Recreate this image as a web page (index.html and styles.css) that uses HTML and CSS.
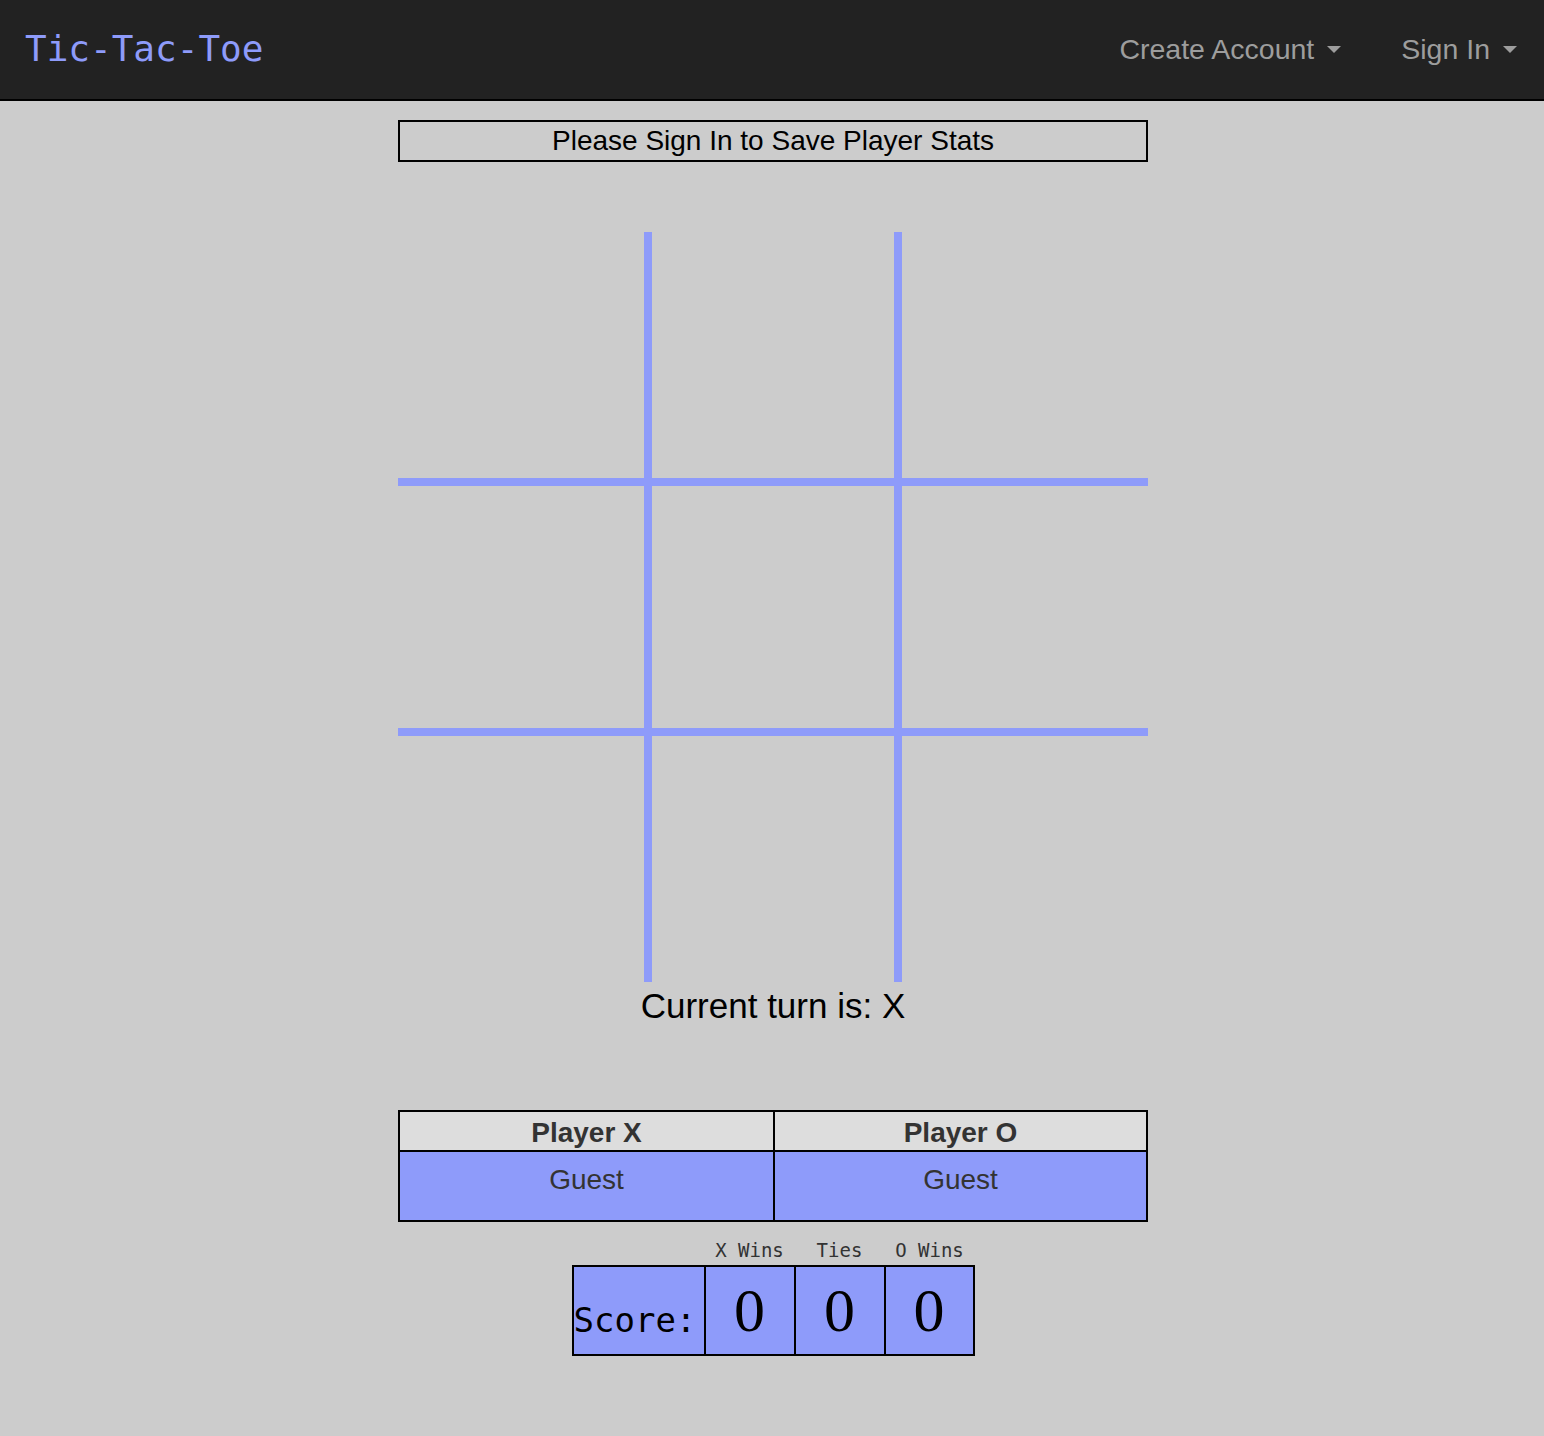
FILE: index.html
```html
<!DOCTYPE html>
<html lang="en">
<head>
<meta charset="UTF-8">
<meta name="viewport" content="width=device-width, initial-scale=1.0">
<title>Tic-Tac-Toe</title>
<link rel="stylesheet" href="styles.css">
</head>
<body>
<nav class="navbar">
  <div class="brand">Tic-Tac-Toe</div>
  <ul class="nav-links">
    <li class="nav-item">Create Account <span class="caret"></span></li>
    <li class="nav-item">Sign In <span class="caret"></span></li>
  </ul>
</nav>

<main class="container">
  <div class="message">Please Sign In to Save Player Stats</div>

  <div class="board">
    <div class="cell" data-index="0"></div>
    <div class="cell" data-index="1"></div>
    <div class="cell" data-index="2"></div>
    <div class="cell" data-index="3"></div>
    <div class="cell" data-index="4"></div>
    <div class="cell" data-index="5"></div>
    <div class="cell" data-index="6"></div>
    <div class="cell" data-index="7"></div>
    <div class="cell" data-index="8"></div>
  </div>

  <div class="turn">Current turn is: <span id="turn">X</span></div>

  <div class="players">
    <div class="player-head">Player X</div>
    <div class="player-head">Player O</div>
    <div class="player-name">Guest</div>
    <div class="player-name">Guest</div>
  </div>

  <div class="score">
    <div class="score-labels">
      <span class="score-spacer"></span>
      <span class="score-label">X Wins</span>
      <span class="score-label">Ties</span>
      <span class="score-label">O Wins</span>
    </div>
    <div class="score-box">
      <div class="score-title">Score:</div>
      <div class="score-value" id="xWins">0</div>
      <div class="score-value" id="ties">0</div>
      <div class="score-value" id="oWins">0</div>
    </div>
  </div>
</main>
</body>
</html>
```

FILE: styles.css
```css
body {
  margin: 0;
  padding: 0;
  background-color: #ccc;
  font-family: "Liberation Sans", Arial, sans-serif;
  font-size: 28px;
}

/* barra superior */
.navbar {
  display: flex;
  align-items: center;
  justify-content: space-between;
  height: 99px;
  background-color: #222;
  border-bottom: 2px solid #000;
  padding: 0 27px 0 25px;
}
.brand {
  font-family: "DejaVu Sans Mono", monospace;
  font-size: 36px;
  color: #8e9bfa;
  margin-top: -3px;
}
.nav-links {
  display: flex;
  gap: 60px;
  list-style: none;
  margin: 0;
  padding: 0;
}
.nav-item {
  color: #9d9d9d;
  font-size: 28.5px;
  display: flex;
  align-items: center;
}
.caret {
  display: inline-block;
  width: 0;
  height: 0;
  margin-left: 13px;
  border-top: 7px solid #9d9d9d;
  border-left: 7px solid transparent;
  border-right: 7px solid transparent;
}

.container {
  width: 750px;
  margin: 0 0 0 calc(50% - 374px);
}

.message {
  margin-top: 19px;
  border: 2px solid #000;
  height: 38px;
  line-height: 38px;
  text-align: center;
  color: #000;
}

/* tablero */
.board {
  margin-top: 70px;
  display: grid;
  grid-template-columns: repeat(3, 250px);
  grid-template-rows: repeat(3, 250px);
}
.cell {
  box-sizing: border-box;
  border: 0 solid #8e9bfa;
}
.cell:nth-child(3n+1) { border-right-width: 4px; }
.cell:nth-child(3n+2) { border-left-width: 4px; border-right-width: 4px; }
.cell:nth-child(3n) { border-left-width: 4px; }
.cell:nth-child(-n+3) { border-bottom-width: 4px; }
.cell:nth-child(n+4):nth-child(-n+6) { border-top-width: 4px; border-bottom-width: 4px; }
.cell:nth-child(n+7) { border-top-width: 4px; }

.turn {
  margin-top: 4px;
  font-size: 35px;
  line-height: 40px;
  text-align: center;
  color: #000;
}

/* jugadores */
.players {
  margin-top: 84px;
  display: grid;
  grid-template-columns: 1fr 1fr;
  border: 2px solid #000;
  box-sizing: border-box;
  color: #333;
}
.player-head {
  background-color: #ddd;
  border-bottom: 2px solid #000;
  font-weight: bold;
  text-align: center;
  height: 36px;
  padding-top: 2px;
  line-height: 38px;
}
.player-name {
  background-color: #8e9bfa;
  text-align: center;
  line-height: 38px;
  padding: 9px 0 21px 0;
}
.player-head:nth-child(2), .player-name:nth-child(4) {
  border-left: 2px solid #000;
}

/* marcador */
.score {
  width: 403px;
  margin: 0 auto;
}
.score-labels {
  display: flex;
  font-family: "DejaVu Sans Mono", monospace;
  font-size: 19px;
  color: #333;
  margin-top: 16px;
  height: 27px;
  line-height: 24px;
}
.score-spacer {
  width: 133px;
}
.score-label {
  width: 90px;
  text-align: center;
}
.score-box {
  display: flex;
  border: 2px solid #000;
  height: 87px;
  background-color: #8e9bfa;
}
.score-title {
  width: 130px;
  font-family: "DejaVu Sans Mono", monospace;
  font-size: 34px;
  line-height: 40px;
  padding-top: 33px;
  color: #000;
}
.score-value {
  width: 88px;
  border-left: 2px solid #000;
  font-family: "Liberation Serif", serif;
  font-size: 62px;
  line-height: 86px;
  text-align: center;
  color: #000;
}
.score-value:last-child {
  width: 87px;
}
```
